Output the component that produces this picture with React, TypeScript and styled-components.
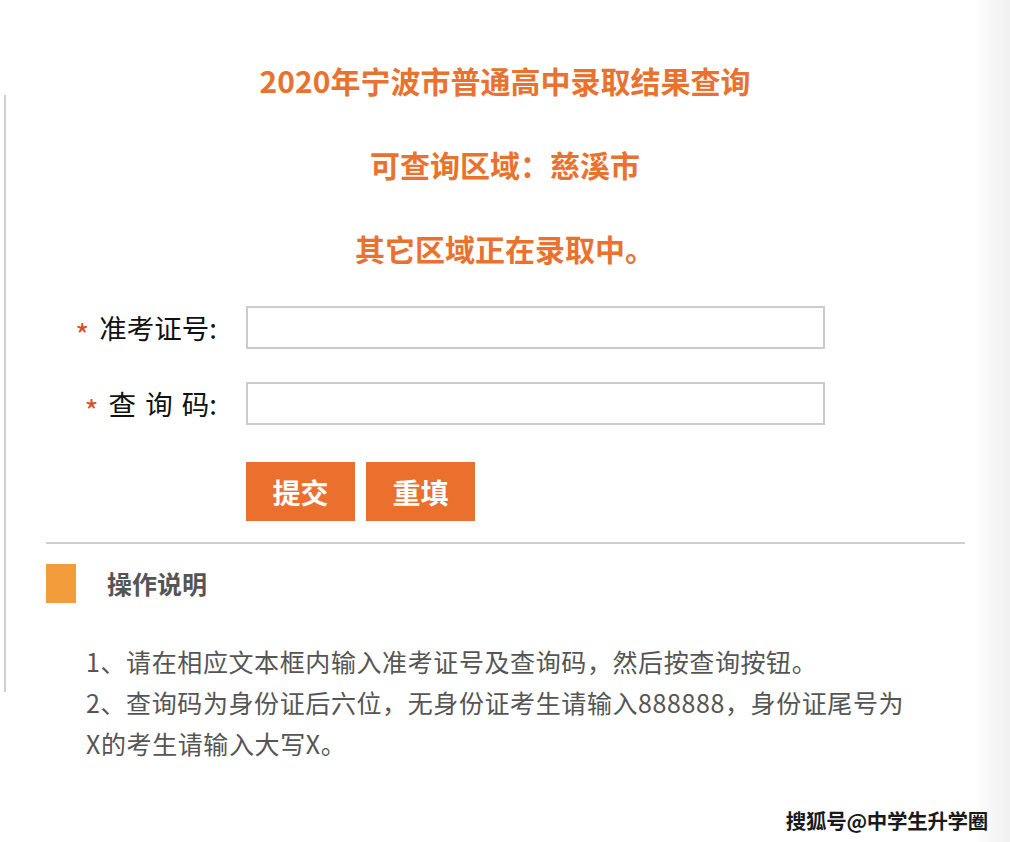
import React from "react";
import styled, { createGlobalStyle } from "styled-components";

const GlobalStyle = createGlobalStyle`
  html, body {
    margin: 0;
    padding: 0;
    height: 100%;
    overflow: hidden;
  }
  body {
    background: linear-gradient(to right, #ffffff 0, #ffffff 972px, #f0f0f0 1010px);
    font-family: "Noto Sans CJK SC", "Noto Sans", sans-serif;
  }
`;

const Page = styled.div`
  position: relative;
  display: flex;
  width: 1010px;
  height: 842px;
`;

const SideRule = styled.div`
  flex: none;
  width: 2px;
  height: 597px;
  margin: 95px 0 0 4px;
  background: #d0d0d0;
`;

const Content = styled.main`
  flex: 1;
  padding-top: 59px;
`;

const Titles = styled.header`
  display: flex;
  flex-direction: column;
  align-items: center;
  gap: 42px;
  padding-right: 6px;
`;

const Title = styled.h1`
  margin: 0;
  font-size: 30px;
  line-height: 42px;
  font-weight: 700;
  color: #e8722e;
`;

const Form = styled.form`
  margin-top: 37px;
  display: grid;
  grid-template-columns: 211px 579px;
  column-gap: 29px;
  row-gap: 33px;
  align-items: center;
`;

const Label = styled.label<{ $spaced?: boolean }>`
  display: flex;
  justify-content: flex-end;
  align-items: center;
  font-size: 27.5px;
  line-height: 43px;
  color: #111;
  word-spacing: ${(p) => (p.$spaced ? "3px" : "0")};
`;

const Star = styled.span`
  color: #d5512b;
  font-size: 30px;
  margin-right: 10px;
  transform: translateY(7px);
`;

const Input = styled.input`
  box-sizing: border-box;
  height: 43px;
  width: 100%;
  margin: 0;
  border: 2px solid #cbcbcb;
  background: #fff;
  outline: none;
`;

const Actions = styled.div`
  grid-column: 2;
  display: flex;
  gap: 11px;
  margin-top: 4px;
`;

const Button = styled.button`
  width: 109px;
  height: 59px;
  border: none;
  padding: 0;
  background: #eb702d;
  color: #fff;
  font-family: inherit;
  font-size: 28px;
  font-weight: 700;
  cursor: pointer;
`;

const Divider = styled.hr`
  width: 919px;
  height: 2px;
  margin: 21px 0 0 40px;
  border: 0;
  background: #cfcfcf;
`;

const SectionHead = styled.div`
  display: flex;
  align-items: center;
  gap: 31px;
  margin: 20px 0 0 40px;
`;

const Marker = styled.span`
  width: 30px;
  height: 39px;
  background: #f39c3c;
`;

const SectionTitle = styled.h2`
  margin: 0;
  font-size: 25px;
  line-height: 39px;
  font-weight: 700;
  color: #555;
`;

const Instructions = styled.div`
  margin-top: 38px;
  padding-left: 80px;
  width: 824px;
  font-size: 25px;
  line-height: 41px;
  letter-spacing: 0.6px;
  color: #555;
`;

const Item = styled.p`
  margin: 0;
`;

const Watermark = styled.div`
  position: absolute;
  right: 22px;
  top: 807px;
  font-size: 20.5px;
  line-height: 26px;
  font-weight: 700;
  letter-spacing: -0.3px;
  color: #1a1a1a;
  text-shadow: 0 0 2px #fff, 1px 1px 0 #fff;
`;

export default function App() {
  return (
    <>
      <GlobalStyle />
      <Page>
        <SideRule />
        <Content>
          <Titles>
            <Title>2020年宁波市普通高中录取结果查询</Title>
            <Title as="h2">可查询区域：慈溪市</Title>
            <Title as="h2">其它区域正在录取中。</Title>
          </Titles>
          <Form onSubmit={(e) => e.preventDefault()}>
            <Label htmlFor="zkzh">
              <Star>*</Star>准考证号:
            </Label>
            <Input id="zkzh" type="text" />
            <Label htmlFor="cxm" $spaced>
              <Star>*</Star>查 询 码:
            </Label>
            <Input id="cxm" type="text" />
            <Actions>
              <Button type="submit">提交</Button>
              <Button type="reset">重填</Button>
            </Actions>
          </Form>
          <Divider />
          <SectionHead>
            <Marker />
            <SectionTitle>操作说明</SectionTitle>
          </SectionHead>
          <Instructions>
            <Item>1、请在相应文本框内输入准考证号及查询码，然后按查询按钮。</Item>
            <Item>2、查询码为身份证后六位，无身份证考生请输入888888，身份证尾号为X的考生请输入大写X。</Item>
          </Instructions>
        </Content>
        <Watermark>搜狐号@中学生升学圈</Watermark>
      </Page>
    </>
  );
}
